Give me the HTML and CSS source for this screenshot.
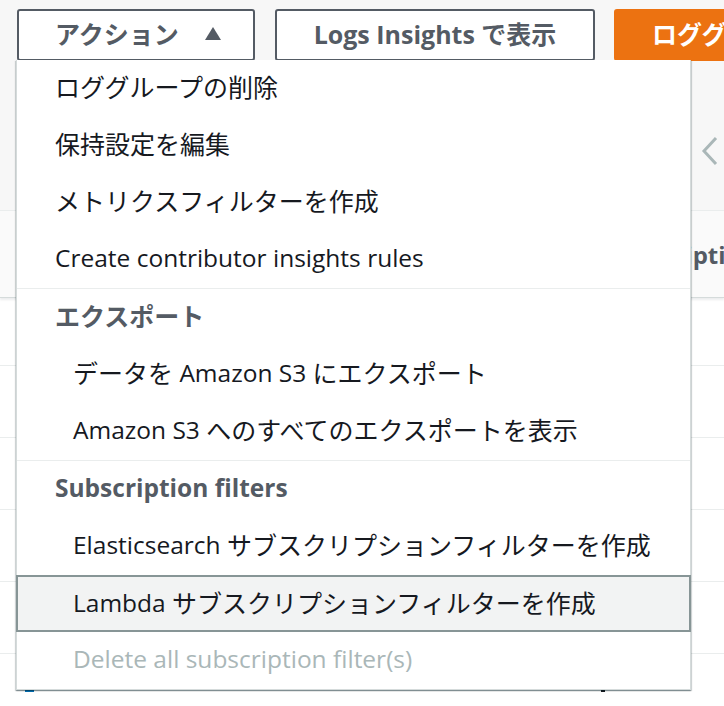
FILE: index.html
```html
<!DOCTYPE html>
<html lang="ja">
  <head>
    <meta charset="UTF-8" />
    <meta name="viewport" content="width=device-width, initial-scale=1.0" />
    <title>ロググループ</title>
    <link rel="stylesheet" href="styles.css">
  </head>
  <body>
    <div class="pagina">
      <div class="barra">
        <button class="boton">アクション <span class="flecha"></span></button>
        <button class="boton">Logs Insights で表示</button>
        <button class="boton primario">ロググループを作成</button>
      </div>

      <div class="zona-filtro">
        <svg class="chevron" width="20" height="30" viewBox="0 0 20 30">
          <polyline points="16,2 4,15 16,28" fill="none" stroke="#aab7b8" stroke-width="3" />
        </svg>
      </div>
      <div class="cabecera">
        <span class="col-nombre"></span>
        <span class="col-sub">Subscriptions</span>
      </div>
      <div class="fila primera"></div>
      <div class="fila"></div>
      <div class="fila"></div>
      <div class="fila"></div>
      <div class="fila"></div>
      <div class="fila ultima">
        <span class="marca azul"></span>
        <span class="marca oscura"></span>
      </div>

      <!-- Menú desplegable de Acciones, encima de la tabla -->
      <ul class="menu">
        <li class="grupo">
          <ul>
            <li class="opcion"><span class="ja">ロググループの削除</span></li>
            <li class="opcion"><span class="ja">保持設定を編集</span></li>
            <li class="opcion"><span class="ja">メトリクスフィルターを作成</span></li>
            <li class="opcion">Create contributor insights rules</li>
          </ul>
        </li>
        <li class="grupo">
          <span class="titulo"><span class="ja">エクスポート</span></span>
          <ul>
            <li class="opcion hija"><span class="ja">データを</span>&nbsp;Amazon S3&nbsp;<span class="ja">にエクスポート</span></li>
            <li class="opcion hija">Amazon S3&nbsp;<span class="ja">へのすべてのエクスポートを表示</span></li>
          </ul>
        </li>
        <li class="grupo">
          <span class="titulo">Subscription filters</span>
          <ul>
            <li class="opcion hija">Elasticsearch&nbsp;<span class="ja">サブスクリプションフィルターを作成</span></li>
            <li class="opcion hija activa">Lambda&nbsp;<span class="ja">サブスクリプションフィルターを作成</span></li>
            <li class="opcion hija desactivada">Delete all subscription filter(s)</li>
          </ul>
        </li>
      </ul>
    </div>
  </body>
</html>
```

FILE: styles.css
```css
/* Fuente parecida a Amazon Ember; los textos japoneses caen en Noto Sans CJK */
body {
  margin: 0;
  background-color: white;
  font-family: "Open Sans", "Noto Sans CJK JP", sans-serif;
  color: #16191f;
  overflow: hidden;
}

.pagina {
  position: relative;
  height: 706px;
  overflow: hidden;
}

/* Barra de botones de arriba */
.barra {
  display: flex;
  gap: 20px;
  padding: 9px 0 0 17px;
  height: 53px;
  background-color: #f7f7f7;
  white-space: nowrap;
  overflow: hidden;
}

.boton {
  height: 52px;
  border: 2px solid #545b64;
  border-radius: 3px;
  background-color: white;
  color: #545b64;
  font-family: "Open Sans", "Noto Sans CJK JP", sans-serif;
  font-size: 25px;
  font-weight: bold;
  padding: 0 36px 5px;
  display: flex;
  align-items: center;
  flex-shrink: 0;
}

.boton:first-child {
  width: 238px;
  padding-left: 36px;
}

.boton:nth-child(2) {
  width: 320px;
  justify-content: center;
  padding: 0 0 5px;
}

.primario {
  background-color: #ec7211;
  border-color: #ec7211;
  color: white;
  margin-left: -1px;
}

/* Triángulo del botón de acciones */
.flecha {
  display: inline-block;
  margin-left: 26px;
  margin-top: 2px;
  border-left: 8px solid transparent;
  border-right: 8px solid transparent;
  border-bottom: 13px solid #545b64;
}

/* Zona gris con el paginador */
.zona-filtro {
  height: 148px;
  background-color: #f7f7f7;
  border-bottom: 1px solid #eaeded;
  display: flex;
  justify-content: flex-end;
  align-items: center;
  padding-right: 4px;
}

.chevron {
  margin-top: 30px;
}

.cabecera {
  height: 86px;
  background-color: #fafafa;
  border-bottom: 1px solid #d5dbdb;
  box-shadow: 0 2px 2px rgba(0, 28, 36, 0.08);
  display: grid;
  grid-template-columns: 606px 1fr;
  align-items: center;
  font-size: 24px;
  font-weight: bold;
  color: #545b64;
  white-space: nowrap;
  overflow: hidden;
}

.fila {
  height: 71px;
  border-bottom: 1px solid #eaeded;
}

.fila.primera {
  height: 67px;
}

.fila.ultima {
  border-bottom: none;
  display: flex;
  padding-top: 35px;
  height: 36px;
}

.marca {
  display: inline-block;
  height: 3px;
}

.marca.azul {
  width: 9px;
  margin-left: 25px;
  background-color: #0073bb;
}

.marca.oscura {
  width: 4px;
  margin-left: 567px;
  background-color: #16191f;
}

/* Menú desplegable */
.menu {
  position: absolute;
  top: 60px;
  left: 16px;
  width: 673px;
  margin: 0;
  padding: 0;
  list-style: none;
  background-color: white;
  border: 1px solid #d5dbdb;
  border-top: none;
  box-shadow: 0 1px 1px 0 rgba(0, 28, 36, 0.3), 1px 1px 1px 0 rgba(0, 28, 36, 0.15),
    -1px 1px 1px 0 rgba(0, 28, 36, 0.15);
  font-size: 24.5px;
}

/* El japonés de Noto CJK sale algo más estrecho que en la captura */
.menu .ja {
  font-size: 25px;
}

.menu ul {
  margin: 0;
  padding: 0;
  list-style: none;
}

.grupo + .grupo {
  border-top: 1px solid #eaeded;
}

.titulo,
.opcion {
  display: flex;
  align-items: center;
  height: 57px;
  padding: 0 0 5px 38px;
  white-space: nowrap;
  box-sizing: border-box;
}

.titulo {
  font-weight: bold;
  color: #545b64;
}

.opcion.hija {
  padding-left: 56px;
}

.opcion.activa {
  background-color: #f2f3f3;
  border: 2px solid #879596;
  margin: 0 -1px;
  padding: 0 0 3px 55px;
}

.opcion.desactivada {
  color: #aab7b8;
}
```
